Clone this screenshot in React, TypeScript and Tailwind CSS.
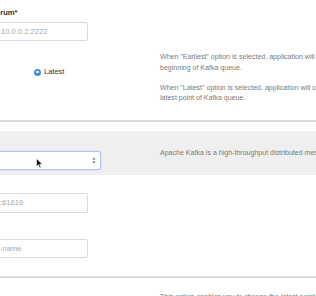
import React from 'react';

function Help({ children, className = '' }: { children: React.ReactNode; className?: string }) {
  return (
    <p className={`whitespace-nowrap text-[7.05px] leading-[10.5px] text-[#7a7a7a] ${className}`}>
      {children}
    </p>
  );
}

function TextInput({ placeholder, shift, className = '' }: { placeholder: string; shift: string; className?: string }) {
  return (
    <div
      className={`flex w-[103px] items-center overflow-hidden rounded-[2px] border border-[#dcdcdc] bg-white ${className}`}
    >
      <span className={`whitespace-nowrap text-[7.6px] text-[#a8a8a8] ${shift}`}>{placeholder}</span>
    </div>
  );
}

export default function App() {
  return (
    <div
      className="relative h-[296px] w-[316px] overflow-hidden bg-white"
      style={{ fontFamily: '"Liberation Sans", Arial, sans-serif' }}
    >
      {/* quorum + offset */}
      <div className="flex h-[120px]">
        <div className="-ml-[15px] w-[175px] shrink-0 pt-[8px]">
          <label className="block text-[7.6px] font-bold leading-[10px] text-[#333]">Quorum*</label>
          <TextInput placeholder="10.0.0.2:2222" shift="ml-[15px]" className="mt-[4px] h-[19px]" />
          <div className="mt-[26px] flex items-center gap-[3px] pl-[49px]">
            <span className="flex h-[7px] w-[7px] items-center justify-center rounded-full bg-[#3d8ee3]">
              <span className="h-[2.5px] w-[2.5px] rounded-full bg-white" />
            </span>
            <span className="text-[7.5px] leading-[10px] text-[#333]">Latest</span>
          </div>
        </div>
        <div className="flex-1 pt-[52px]">
          <Help>
            When "Earliest" option is selected, application will start reading from the
            <br />
            beginning of Kafka queue.
          </Help>
          <Help className="mt-[9.5px]">
            When "Latest" option is selected, application will consume from the
            <br />
            latest point of Kafka queue.
          </Help>
        </div>
      </div>
      <div className="h-[2px] bg-[#d8d8d8]" />

      {/* broker type */}
      <div className="mt-[9px] flex h-[44px] bg-[#efefef]">
        <div className="-ml-[15px] w-[175px] shrink-0 pt-[20px]">
          <div className="flex h-[19px] w-[116px] items-center justify-end rounded-[3px] border border-[#a9c6e6] bg-white pr-[4px] shadow-[0_0_2px_rgba(90,150,220,0.35)]">
            <svg width="4" height="7" viewBox="0 0 4 7">
              <path d="M2 0.5 L3.6 2.6 H0.4 Z M2 6.5 L3.6 4.4 H0.4 Z" fill="#666" />
            </svg>
          </div>
        </div>
        <div className="flex-1 pt-[17px]">
          <Help className="leading-[10px]">Apache Kafka is a high-throughput distributed messaging system.</Help>
        </div>
      </div>

      {/* broker + topic */}
      <div className="flex pt-[18px]">
        <div className="-ml-[15px] w-[175px] shrink-0">
          <TextInput placeholder="localhost:61616" shift="-ml-[16px]" className="h-[20px]" />
          <TextInput placeholder="topic-name" shift="-ml-[2px]" className="mt-[26px] h-[19px]" />
        </div>
      </div>
      <div className="mt-[18px] h-[2px] bg-[#d8d8d8]" />

      <div className="flex pt-[14px]">
        <div className="w-[160px] shrink-0" />
        <Help>This option enables you to choose the latest point of Kafka queue.</Help>
      </div>

      {/* mouse pointer */}
      <svg className="absolute left-[36px] top-[158px]" width="7" height="11" viewBox="0 0 7 11">
        <path d="M0.5 0.5 L0.5 8.5 L2.4 6.8 L3.8 10 L5 9.4 L3.7 6.3 L6.3 6.3 Z" fill="#111" stroke="#fff" strokeWidth="0.6" />
      </svg>
    </div>
  );
}
